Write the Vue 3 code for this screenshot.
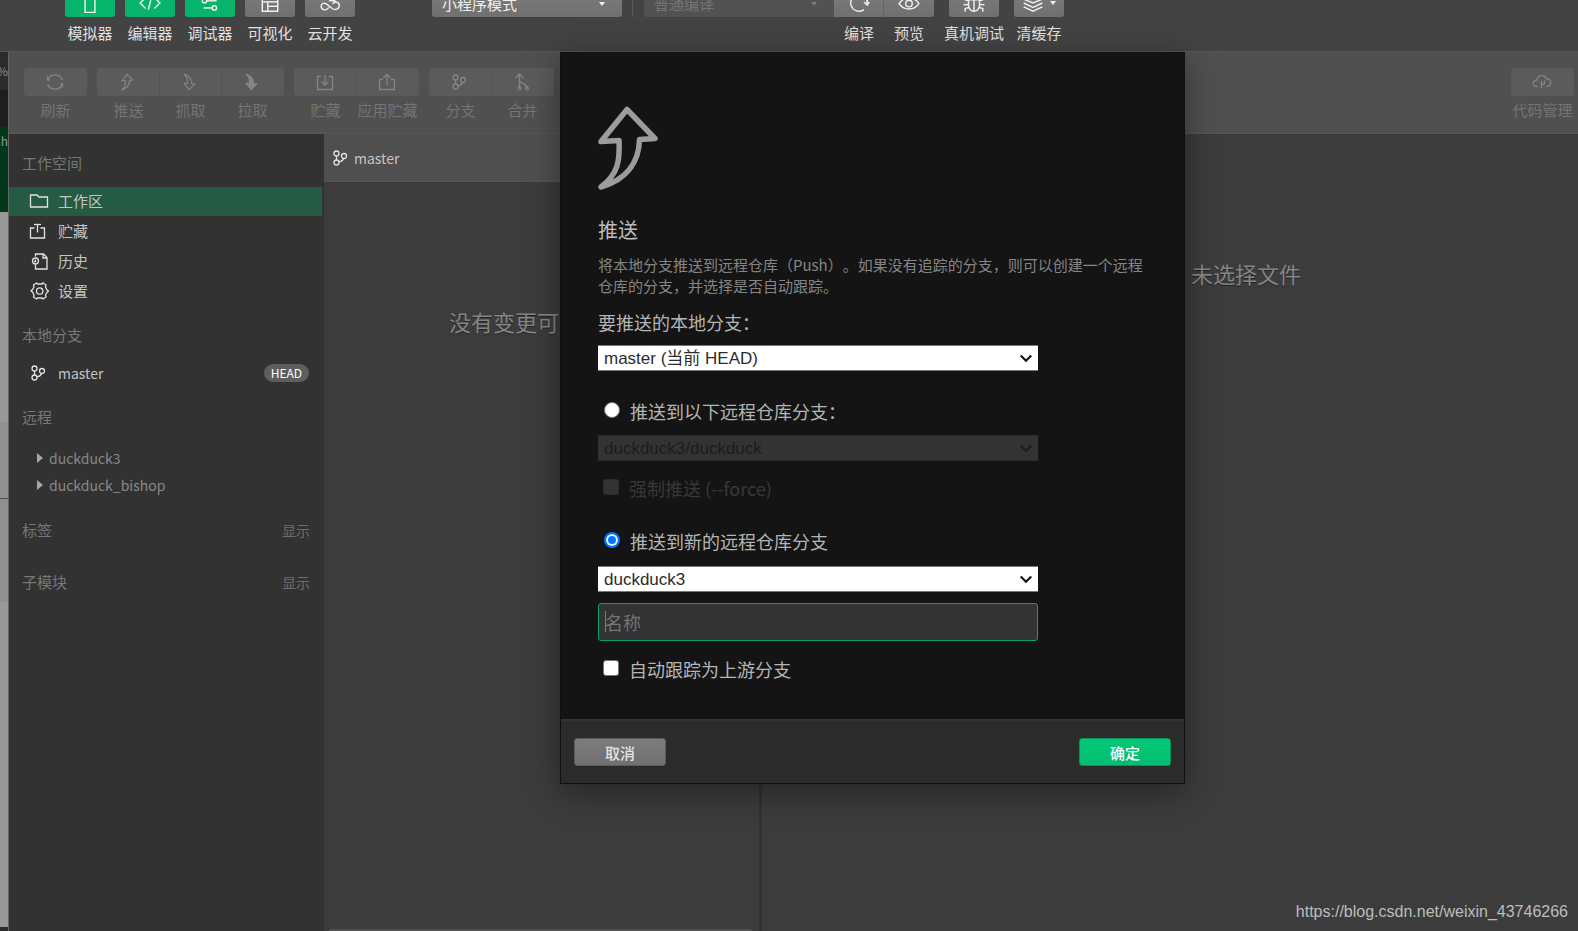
<template>
  <div class="app">
    <header class="topbar">
      <div class="panel-tools">
        <div v-for="t in panelTools" :key="t.label" class="tool">
          <button type="button" class="tool-btn" :class="{ active: t.active }" :aria-label="t.label">
            <Icon :name="t.icon" :size="22" />
          </button>
          <span class="tool-label">{{ t.label }}</span>
        </div>
      </div>

      <div class="mode-picker">
        <select v-model="mode" aria-label="模式">
          <option>小程序模式</option>
        </select>
        <i class="caret" />
      </div>
      <i class="divider" />
      <div class="mode-picker joined">
        <select disabled aria-label="编译">
          <option>普通编译</option>
        </select>
        <i class="caret dim" />
      </div>

      <div class="compile-tools">
        <div v-for="t in compileTools" :key="t.label" class="tool">
          <button type="button" class="tool-btn" :aria-label="t.label">
            <Icon :name="t.icon" :size="22" />
          </button>
          <span class="tool-label">{{ t.label }}</span>
        </div>
      </div>
      <div v-for="t in extraTools" :key="t.label" class="tool spaced">
        <button type="button" class="tool-btn" :aria-label="t.label">
          <Icon :name="t.icon" :size="22" />
          <i v-if="t.menu" class="caret inline" />
        </button>
        <span class="tool-label">{{ t.label }}</span>
      </div>
    </header>

    <div class="body">
      <!-- what is left of the simulator next to the git window -->
      <aside class="simulator">
        <div class="sim-zoom">0%</div>
        <div class="sim-bar" />
        <div class="sim-title">Ch</div>
        <div class="sim-page light" />
        <div class="sim-page mid" />
        <div class="sim-page low" />
        <div class="sim-page rest" />
        <div class="sim-foot" />
      </aside>

      <main class="git">
        <div class="git-toolbar">
          <div v-for="(group, i) in gitGroups" :key="i" class="git-group">
            <div v-for="t in group" :key="t.label" class="git-tool">
              <button type="button" disabled :aria-label="t.label">
                <Icon :name="t.icon" :size="20" />
              </button>
              <span>{{ t.label }}</span>
            </div>
          </div>
        </div>

        <div class="git-content">
          <nav class="sidebar">
            <h3>工作空间</h3>
            <ul class="rows">
              <li v-for="w in workspace" :key="w.label" :class="{ selected: w.selected }">
                <Icon :name="w.icon" :size="20" />{{ w.label }}
              </li>
            </ul>
            <h3>本地分支</h3>
            <ul class="rows branches">
              <li><Icon name="branch" :size="20" />master<span class="head-badge">HEAD</span></li>
            </ul>
            <h3>远程</h3>
            <ul class="tree">
              <li v-for="r in remotes" :key="r">{{ r }}</li>
            </ul>
            <h3>标签<button type="button">显示</button></h3>
            <h3>子模块<button type="button">显示</button></h3>
          </nav>

          <section class="changes">
            <div class="branch-bar"><Icon name="branch" :size="20" />master</div>
            <p class="empty">没有变更可</p>
            <div class="commit-box" />
          </section>

          <section class="diff">
            <p class="empty">未选择文件</p>
          </section>
        </div>
      </main>
    </div>

    <form class="dialog" role="dialog" aria-labelledby="dialog-title" @submit.prevent>
      <div class="dialog-body">
        <svg class="dialog-icon" viewBox="0 0 60 84" fill="none">
          <path :d="pushShape" stroke="currentColor" stroke-width="5.5" stroke-linejoin="round" />
        </svg>
        <h2 id="dialog-title">推送</h2>
        <p class="desc">将本地分支推送到远程仓库（Push）。如果没有追踪的分支，则可以创建一个远程仓库的分支，并选择是否自动跟踪。</p>

        <label class="field-label" for="local">要推送的本地分支：</label>
        <div class="picker">
          <select id="local" v-model="local">
            <option>master (当前 HEAD)</option>
          </select>
          <Icon name="chevron" :size="14" />
        </div>

        <label class="choice first">
          <input v-model="target" type="radio" name="target" value="existing">推送到以下远程仓库分支：
        </label>
        <div class="picker" :class="{ off: target !== 'existing' }">
          <select :disabled="target !== 'existing'" aria-label="远程仓库分支">
            <option>duckduck3/duckduck</option>
          </select>
          <Icon name="chevron" :size="14" />
        </div>
        <label class="choice force" :class="{ off: target !== 'existing' }">
          <input type="checkbox" :disabled="target !== 'existing'">强制推送 (--force)
        </label>

        <label class="choice second">
          <input v-model="target" type="radio" name="target" value="new">推送到新的远程仓库分支
        </label>
        <div class="picker">
          <select v-model="remote" aria-label="远程仓库">
            <option v-for="r in remotes" :key="r">{{ r }}</option>
          </select>
          <Icon name="chevron" :size="14" />
        </div>
        <div class="name-field" :class="{ blank: !branchName }">
          <input v-model="branchName" type="text" placeholder="名称" aria-label="名称">
        </div>
        <label class="choice track">
          <input v-model="track" type="checkbox">自动跟踪为上游分支
        </label>
      </div>
      <footer class="dialog-footer">
        <button type="button">取消</button>
        <button type="submit" class="primary">确定</button>
      </footer>
    </form>

    <a class="credit" href="https://blog.csdn.net/weixin_43746266">https://blog.csdn.net/weixin_43746266</a>
  </div>
</template>

<script setup>
import { h, ref } from 'vue'

const pushShape = 'M29 3.5 L57 32.5 L41.5 33.5 C41 55 30 73 3 81 C20 68 22 55 21 34.5 L3 35.5 Z'

/** Stroke paths, all in a 20×20 viewBox. */
const paths = {
  phone: ['M5.5 1.5 H14.5 V18.5 H5.5 Z'],
  code: ['M6 5 L1 10 L6 15', 'M14 5 L19 10 L14 15', 'M11.5 4 L8.5 16'],
  sliders: ['M7 8 H16', 'M4 14.5 H12', 'M5 6 A2 2 0 1 0 5 10 A2 2 0 1 0 5 6', 'M14 12.5 A2 2 0 1 0 14 16.5 A2 2 0 1 0 14 12.5'],
  layout: ['M3 3.5 H17 V17.5 H3 Z', 'M3 9 H17', 'M8 9 V17.5', 'M8 13 H17'],
  cloudDev: ['M9 14 C6 18 2 16 2 13 C2 10 5 9.5 7 11 L12 15 C15 17 18.5 15.500 18.5 12 C18.5 9 14 8 12.500 11 M9 8 H15'],
  compile: ['M10 2.5 A7.5 7.5 0 1 0 14.5 16', 'M17.5 5 V11', 'M14.5 9 L17.5 12 L19.5 9', 'M10 2.5 A7.5 7.5 0 0 1 17.5 10'],
  eye: ['M1 10.5 C5 4 15 4 19 10.5 C15 17 5 17 1 10.5 Z', 'M10 7.5 A3 3 0 1 0 10 13.5 A3 3 0 1 0 10 7.5'],
  bug: ['M5 7 H15 V12 A5 5.5 0 0 1 5 12 Z', 'M10 7 V17.5', 'M0.5 11.5 H5', 'M15 11.5 H19.5', 'M5 8 L2 7 V4', 'M15 8 L18 7 V4', 'M5.5 14 L2 15 V18', 'M14.5 14 L18 15 V18', 'M7 7 C7 3 13 3 13 7'],
  layers: ['M1.5 6.5 L10 3 L18.5 6.5 L10 10 Z', 'M1.5 10 L10 14 L18.5 10', 'M1.5 13.5 L10 17.5 L18.5 13.5'],
  refresh: ['M2.5 8 A8 8 0 0 1 17.5 8', 'M2.5 12 A8 8 0 0 0 17.5 12', 'M2.5 4.5 V8 H5', 'M17.5 15.5 V12 H15'],
  stash: ['M6 4.5 H2.5 V17.5 H17.5 V4.5 H14', 'M10 3 V13', 'M6.5 9.5 L10 13 L13.5 9.5'],
  unstash: ['M6 7.5 H2.5 V17.5 H17.5 V7.5 H14', 'M10 3 V13', 'M6.5 6 L10 2.5 L13.5 6'],
  branch: ['M5.5 3 A2.5 2.5 0 1 0 5.5 8 A2.5 2.5 0 1 0 5.5 3', 'M5.5 12 A2.5 2.5 0 1 0 5.5 17 A2.5 2.5 0 1 0 5.5 12', 'M13 5.5 A2.5 2.5 0 1 0 13 10.5 A2.5 2.5 0 1 0 13 5.5', 'M5.5 8 V12', 'M12.5 10.5 C12 13 10 13.5 7.8 14'],
  merge: ['M7.5 16 V2.5', 'M3.5 6 L7.5 2 L11.5 6', 'M7.5 9 C9.5 12 14.5 11 15 16', 'M7.5 15 A1.3 1.3 0 1 0 7.5 17.6 A1.3 1.3 0 1 0 7.5 15', 'M15 15 A1.3 1.3 0 1 0 15 17.6 A1.3 1.3 0 1 0 15 15'],
  cloud: ['M5.5 14.5 C0 14.5 0 8 5 8 C6 2.5 13 2.5 14 6.5 C20 6 20.5 14.5 14.5 14.5', 'M9.5 16 V9', 'M9.5 13 L12.5 11.5 V8.5'],
  folder: ['M1.5 4 H8 L10 6 H18.5 V16 H1.5 Z'],
  tray: ['M5.5 7 H1.5 V17 H15.5 V7 H11.5', 'M8.5 3.5 V11.5', 'M5 3.5 H12'],
  history: ['M6.5 5.5 V3 H14.5 L18 6.5 V18 H6.5 V14', 'M14 3 V7 H18', 'M6.5 7 A3 3 0 1 0 6.5 13 A3 3 0 1 0 6.5 7', 'M6.5 8.5 V10.5 H5'],
  gear: ['M7.5 2 L8.5 3 H13 L14 1.8 L17 4 L16.5 6 L18 9 L19.5 10 L18 11.5 L16.5 14 L17 16 L14 18 L13 17 H8.5 L7.5 18 L4.5 16 L5 14 L3.5 11 L2 10 L3.5 8.5 L5 6 L4.5 4 Z', 'M10.7 6.8 A3.2 3.2 0 1 0 10.7 13.2 A3.2 3.2 0 1 0 10.7 6.8'],
  chevron: ['M2.5 6.5 L10 14 L17.5 6.5'],
}

// push, fetch and pull share the dialog's arrow
const arrows = {
  push: { flip: false, fill: 'none' },
  fetch: { flip: true, fill: 'none' },
  pull: { flip: true, fill: 'currentColor' },
}

function Icon(props) {
  const arrow = arrows[props.name]
  const attrs = {
    class: 'icon', width: props.size, height: props.size,
    fill: 'none', stroke: 'currentColor', 'aria-hidden': 'true',
  }
  if (arrow) {
    return h('svg', { ...attrs, viewBox: '-17 -8 100 100' }, [
      h('path', {
        d: pushShape, fill: arrow.fill, 'stroke-width': 6, 'stroke-linejoin': 'round',
        transform: arrow.flip ? 'translate(0 84) scale(1 -1)' : undefined,
      }),
    ])
  }
  return h('svg', { ...attrs, viewBox: '0 0 20 20', 'stroke-width': props.name === 'chevron' ? 3 : 1.3 },
    paths[props.name].map(d => h('path', { d })))
}
Icon.props = ['name', 'size']

const panelTools = [
  { label: '模拟器', icon: 'phone', active: true },
  { label: '编辑器', icon: 'code', active: true },
  { label: '调试器', icon: 'sliders', active: true },
  { label: '可视化', icon: 'layout' },
  { label: '云开发', icon: 'cloudDev' },
]
const compileTools = [
  { label: '编译', icon: 'compile' },
  { label: '预览', icon: 'eye' },
]
const extraTools = [
  { label: '真机调试', icon: 'bug' },
  { label: '清缓存', icon: 'layers', menu: true },
]
const gitGroups = [
  [{ label: '刷新', icon: 'refresh' }],
  [{ label: '推送', icon: 'push' }, { label: '抓取', icon: 'fetch' }, { label: '拉取', icon: 'pull' }],
  [{ label: '贮藏', icon: 'stash' }, { label: '应用贮藏', icon: 'unstash' }],
  [{ label: '分支', icon: 'branch' }, { label: '合并', icon: 'merge' }],
  [{ label: '代码管理', icon: 'cloud' }],
]
const workspace = [
  { label: '工作区', icon: 'folder', selected: true },
  { label: '贮藏', icon: 'tray' },
  { label: '历史', icon: 'history' },
  { label: '设置', icon: 'gear' },
]
const remotes = ['duckduck3', 'duckduck_bishop']

const mode = ref('小程序模式')
const local = ref('master (当前 HEAD)')
const target = ref('new')
const remote = ref('duckduck3')
const branchName = ref('')
const track = ref(false)
</script>

<style>
body { margin: 0; background: #3c3c3c; }
</style>

<style scoped>
.app {
  position: relative; display: flex; flex-direction: column;
  height: 100vh; overflow: hidden;
  font-family: 'Noto Sans CJK SC', 'Noto Sans', sans-serif; font-size: 15px;
  color: #c4c4c4;
}
button, select, input { font: inherit; margin: 0; }
ul, h2, h3, p { margin: 0; padding: 0; list-style: none; font-weight: 400; }
.icon { flex: none; display: block; }

/* top bar */
.topbar {
  display: flex; align-items: flex-end; flex: none;
  height: 51px; padding-left: 65px; overflow: hidden;
  background: #434343; border-bottom: 1px solid #555;
}
.panel-tools { display: flex; gap: 10px; margin-right: 77px; }
.tool { display: flex; flex-direction: column; align-items: center; width: 50px; flex: none; }
.tool.spaced { margin-left: 15px; }
.tool-btn {
  display: flex; align-items: center; justify-content: center;
  width: 50px; height: 28px; padding: 0; border: 0; border-radius: 3px;
  background: linear-gradient(#7c7c7c, #707070); color: #f0f0f0;
}
.tool-btn.active { background: #07b46b; }
.tool-label { padding-bottom: 2px; line-height: 32px; white-space: nowrap; color: #e0e0e0; }
.compile-tools { display: flex; }
.compile-tools .tool:first-child .tool-btn { border-radius: 0; border-right: 1px solid #656565; }
.compile-tools .tool:last-child .tool-btn { border-radius: 0 3px 3px 0; }
.mode-picker { position: relative; width: 190px; margin-bottom: 34px; flex: none; }
.mode-picker select {
  appearance: none; display: block; width: 100%; height: 28px;
  padding: 0 10px; border: 0; border-radius: 3px;
  background: linear-gradient(#7c7c7c, #707070); color: #f0f0f0;
}
.mode-picker.joined select { border-radius: 3px 0 0 3px; background: #525252; color: #757575; opacity: 1; }
.divider { width: 1px; height: 28px; margin: 0 11px 34px 10px; background: #5a5a5a; }
.caret {
  position: absolute; right: 17px; top: 13px;
  border: 3px solid transparent; border-top: 4px solid #f0f0f0; border-bottom: 0;
}
.caret.dim { border-top-color: #7c7c7c; }
.caret.inline { position: static; margin-left: 6px; }

.body { display: flex; flex: 1; min-height: 0; }

/* simulator strip */
.simulator {
  display: flex; flex-direction: column; flex: none;
  width: 8px; overflow: hidden; border-right: 1px solid #646464;
}
.sim-zoom, .sim-title { display: flex; justify-content: flex-end; font-size: 12px; }
.sim-zoom { height: 38px; line-height: 38px; background: #2b2b2b; color: #8a8a8a; }
.sim-bar { height: 37px; background: #1e1e1e; }
.sim-title { height: 85px; line-height: 28px; background: #04381c; color: #8b9a91; }
.sim-page { background: #999; }
.sim-page.light { height: 210px; }
.sim-page.mid { height: 76px; background: #8f9190; border-bottom: 1px solid #505050; }
.sim-page.low { height: 103px; background: #8f9190; }
.sim-page.rest { flex: 1; }
.sim-foot { height: 4px; background: #2b2b2b; }

/* git window */
.git { display: flex; flex-direction: column; flex: 1; min-width: 0; }
.git-toolbar {
  display: flex; gap: 10px; flex: none;
  padding: 16px 4px 9px 15px; background: #505050; border-bottom: 1px solid #585858;
}
.git-group { display: flex; }
.git-group:last-child { margin-left: auto; }
.git-tool { display: flex; flex-direction: column; align-items: center; width: 63px; color: #747474; }
.git-tool + .git-tool { margin-left: -1px; }
.git-tool button {
  display: flex; align-items: center; justify-content: center;
  width: 100%; height: 28px; padding: 0 2px 0 0; border: 0; background: #5b5b5b; color: #858585;
}
.git-tool:first-child button { border-radius: 4px 0 0 4px; }
.git-tool:last-child button { border-radius: 0 4px 4px 0; }
.git-tool:only-child button { border-radius: 4px; }
.git-tool + .git-tool button { border-left: 1px solid #545454; }
.git-tool span { line-height: 28px; white-space: nowrap; }
.git-content { display: flex; flex: 1; min-height: 0; }

.sidebar { display: flex; flex-direction: column; width: 315px; flex: none; background: #323232; }
.sidebar h3 {
  display: flex; justify-content: space-between;
  margin: 19px 14px 13px 13px; font-size: 15px; line-height: 20px; color: #777;
}
.sidebar h3 button { padding: 0; border: 0; background: none; font-size: 14px; line-height: 20px; color: #6e6e6e; }
.rows { display: grid; gap: 1px; padding-top: 1px; }
.rows li {
  display: flex; align-items: center; gap: 9px; box-sizing: border-box;
  height: 29px; margin-right: 2px; padding: 0 13px 2px 20px;
}
.rows li.selected { background: #255a44; }
.rows .icon { color: #e2e2e2; }
.branches, .branch-bar, .tree { font-size: 14px; }
.head-badge {
  margin-left: auto; padding: 0 7px; border-radius: 9px;
  background: #5e5e5e; color: #fff; font-size: 12px; line-height: 18px;
}
.tree { padding: 4px 0 3px 28px; color: #888; }
.tree li { display: flex; align-items: center; gap: 6px; height: 27px; }
.tree li::before {
  content: ''; border: 5px solid transparent; border-left: 6px solid #a6a6a6; border-right: 0;
}

.changes { display: flex; flex-direction: column; width: 435px; flex: none; border-right: 3px solid #323232; }
.branch-bar {
  display: flex; align-items: center; gap: 3px;
  height: 47px; padding-left: 7px; background: #4f4f4f; border-bottom: 1px solid #565656;
}
.branch-bar .icon { color: #e2e2e2; }
.empty { font-size: 22px; line-height: 32px; color: #858585; text-shadow: 0 1px 0 #222; }
.changes .empty { padding: 123px 0 0 125px; }
.commit-box { height: 2px; margin: auto 7px 0 5px; border-radius: 6px 6px 0 0; background: #505050; }
.diff { flex: 1; }
.diff .empty { padding: 123px 0 0 429px; }

/* push dialog */
.dialog {
  position: absolute; top: 52px; left: 560px; width: 625px; box-sizing: border-box;
  border: 1px solid #101010; background: #141414;
  box-shadow: 0 8px 32px rgba(0, 0, 0, 0.4);
}
.dialog-body { padding: 53px 37px 38px; }
.dialog-icon { display: block; width: 60px; height: 84px; color: #9c9c9c; }
.dialog h2 { margin-top: 26px; font-size: 20px; line-height: 28px; color: #bdbdbd; }
.desc { margin-top: 10px; line-height: 21px; color: #858585; text-spacing-trim: space-all; }
.field-label { display: block; margin: 14px 0 11px; font-size: 18px; line-height: 24px; color: #b5b5b5; }
.picker { position: relative; width: 440px; }
.picker select {
  appearance: none; display: block; width: 100%; height: 26px; padding: 0 6px;
  border: 1px solid #767676; border-width: 1px 0; border-radius: 0;
  background: #fff; color: #2c2c2c; opacity: 1;
  font-family: 'Liberation Sans', 'Noto Sans CJK SC', sans-serif; font-size: 17px;
}
.picker .icon { position: absolute; right: 5px; top: 6px; color: #111; pointer-events: none; }
.picker.off select { border-color: #2b2b2b; background: #333; color: #1d1d1d; }
.picker.off .icon { color: #1d1d1d; }
.choice {
  display: flex; align-items: center; gap: 10px;
  padding-left: 6px; font-size: 18px; line-height: 24px; color: #b5b5b5;
}
.choice.first { margin: 28px 0 12px; }
.choice.force { margin-top: 15px; }
.choice.second { margin: 29px 0 13px; }
.choice.track { margin-top: 16px; }
.choice.off { color: #383838; }
.choice input {
  appearance: none; box-sizing: border-box; flex: none; width: 16px; height: 16px; margin-bottom: 2px;
  border: 1px solid #767676; background: #fff;
}
.choice input[type='radio'] { border-radius: 50%; }
.choice input[type='checkbox'] { margin-left: -1px; border-radius: 3px; }
.choice input[type='radio']:checked { border: 2px solid #0075ff; box-shadow: inset 0 0 0 2px #fff; background: #0075ff; }
.choice.off input { border-color: #2c2c2c; background: #333; }
.name-field { position: relative; margin-top: 11px; }
.name-field input {
  box-sizing: border-box; display: block; width: 440px; height: 38px; padding: 0 6px;
  border: 1px solid #07a564; border-radius: 3px; outline: 0;
  background: #333; color: #c4c4c4; caret-color: transparent; font-size: 18px;
}
.name-field input::placeholder { color: #757575; }
.name-field.blank::after {
  content: ''; position: absolute; left: 7px; top: 8px;
  width: 1px; height: 21px; background: #07c160;
}
.dialog-footer {
  display: flex; justify-content: space-between;
  padding: 17px 13px; background: #2b2b2b; border-top: 2px solid #333;
}
.dialog-footer button {
  width: 92px; height: 28px; padding: 0; border: 1px solid #5c5c5c; border-radius: 3px;
  background: linear-gradient(#7c7c7c, #707070); color: #e4e4e4; font-weight: 500;
}
.dialog-footer .primary { border-color: #079457; background: linear-gradient(#02c877, #04bd70); color: #fff; }

.credit {
  position: absolute; right: 10px; bottom: 9px;
  font-family: 'Liberation Sans', Arial, sans-serif; font-size: 16px; line-height: 20px;
  color: #bcbcbc; text-decoration: none;
}
</style>
